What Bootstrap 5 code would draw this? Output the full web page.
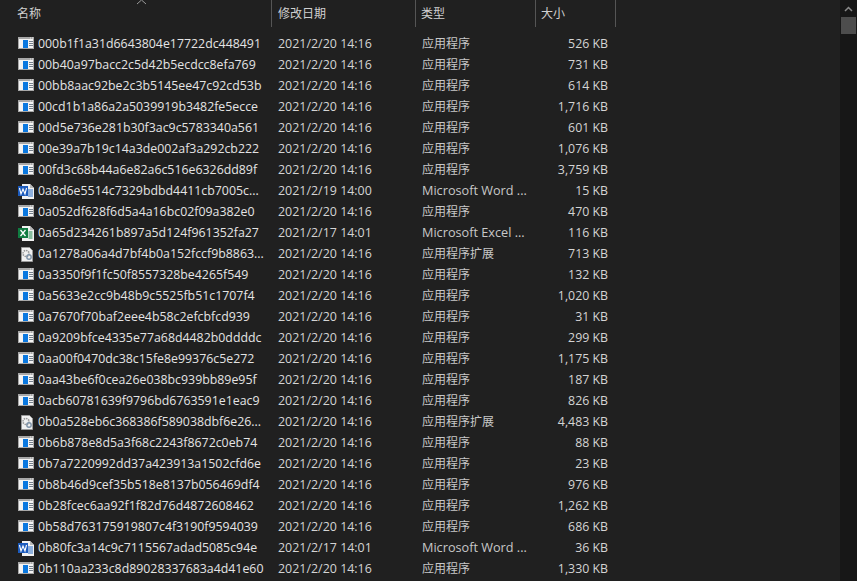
<!DOCTYPE html>
<html lang="zh"><head><meta charset="utf-8"><title>文件列表</title>
<link href="https://cdn.jsdelivr.net/npm/bootstrap@5.3.0/dist/css/bootstrap.min.css" rel="stylesheet">
<style>
html,body{height:581px;overflow:hidden}
body{background:#202020;color:#dcdcdc;font-family:"Open Sans","Noto Sans CJK SC",sans-serif;font-size:12px;line-height:21px}
.shell{height:581px}
.pane{width:840px;min-width:0}
.sbar{width:17px;background:#171717}
.sthumb{width:15px;height:17px;background:#4d4d4d;margin:0 1px}
.sarrow{height:17px}
.headrow{height:27px;line-height:27px;margin-bottom:6px;color:#d0d0d0}
.hname{width:272px;padding-left:17px;border-right:1px solid #555}
.hdate{width:144px;padding-left:6px;border-right:1px solid #555}
.htype{width:120px;padding-left:5px;border-right:1px solid #555}
.hsize{width:80px;padding-left:5px;border-right:1px solid #555}
.sortmark{left:136px;top:-1px}
.filerow{height:21px;white-space:nowrap}
.cicon{width:38px;padding-left:18px}
.cname{width:234px;color:#e4e4e4;overflow:hidden;font-size:12.35px}
.cdate{width:144px;padding-left:6px;color:#d4d4d4;font-size:12.45px}
.ctype{width:120px;padding-left:6px;color:#c8c8c8;overflow:hidden}
.latin{font-size:12.7px}
.csize{width:72px;text-align:right;color:#d4d4d4;font-size:12.35px}
.fic{width:16px;height:16px;display:block}
</style></head><body>
<svg width="0" height="0" class="d-block">
<symbol id="app" viewBox="0 0 16 16"><rect width="16" height="12" fill="#a8a8a8"/><rect x="1" y="2" width="14" height="9" fill="#f4f4f4"/><path d="M12 1h1M14 1h1" stroke="#e8e8e8"/><rect x="5" y="3" width="5" height="8" fill="#0a78e0"/><path d="M11 4.500h4M11 6.500h4M11 8.500h4" stroke="#75808c"/></symbol>
<symbol id="word" viewBox="0 0 16 16"><path d="M4 0h8l4 4v11H4z" fill="#f2f2f2"/><path d="M12 0l4 4h-4z" fill="#b9b9b9"/><path d="M10 6h5M10 8h5M10 10h5M10 12h5" stroke="#2b6fc9"/><rect y="2" width="10" height="10" fill="#1c5bbd"/><path d="M1.500 4l1.500 6 2-5 2 5 1.500-6" fill="none" stroke="#fff" stroke-width="1.100"/></symbol>
<symbol id="excel" viewBox="0 0 16 16"><path d="M4 0h8l4 4v11H4z" fill="#f2f2f2"/><path d="M12 0l4 4h-4z" fill="#b9b9b9"/><path d="M10.500 6h4M10.500 8h4M10.500 10h4M10.500 12h4" stroke="#1f8a4c"/><rect y="2" width="10" height="10" fill="#107c41"/><path d="M2.500 4l5 6M7.500 4l-5 6" stroke="#fff" stroke-width="1.300"/></symbol>
<symbol id="dll" viewBox="0 0 16 16"><path d="M3.500.500h8l3 3v11h-11z" fill="#f1f1f1" stroke="#9a9a9a"/><circle cx="8" cy="6.500" r="3" fill="none" stroke="#9a9a9a" stroke-width="1.600" stroke-dasharray="1.500 .8"/><circle cx="11" cy="10" r="2.200" fill="none" stroke="#7f93a8" stroke-width="1.400"/></symbol>
</svg>
<div class="shell d-flex">
<div class="pane">
<div class="headrow d-flex position-relative">
<svg class="position-absolute sortmark" width="11" height="6" viewBox="0 0 11 6"><path d="M1 5l4.500-4 4.500 4" fill="none" stroke="#9a9a9a"/></svg>
<div class="hname">名称</div><div class="hdate">修改日期</div><div class="htype">类型</div><div class="hsize">大小</div>
</div>
<div class="filerow d-flex"><div class="cicon"><svg class="fic mt-1"><use href="#app"/></svg></div><div class="cname">000b1f1a31d6643804e17722dc448491</div><div class="cdate">2021/2/20 14:16</div><div class="ctype">应用程序</div><div class="csize">526 KB</div></div>
<div class="filerow d-flex"><div class="cicon"><svg class="fic mt-1"><use href="#app"/></svg></div><div class="cname">00b40a97bacc2c5d42b5ecdcc8efa769</div><div class="cdate">2021/2/20 14:16</div><div class="ctype">应用程序</div><div class="csize">731 KB</div></div>
<div class="filerow d-flex"><div class="cicon"><svg class="fic mt-1"><use href="#app"/></svg></div><div class="cname">00bb8aac92be2c3b5145ee47c92cd53b</div><div class="cdate">2021/2/20 14:16</div><div class="ctype">应用程序</div><div class="csize">614 KB</div></div>
<div class="filerow d-flex"><div class="cicon"><svg class="fic mt-1"><use href="#app"/></svg></div><div class="cname">00cd1b1a86a2a5039919b3482fe5ecce</div><div class="cdate">2021/2/20 14:16</div><div class="ctype">应用程序</div><div class="csize">1,716 KB</div></div>
<div class="filerow d-flex"><div class="cicon"><svg class="fic mt-1"><use href="#app"/></svg></div><div class="cname">00d5e736e281b30f3ac9c5783340a561</div><div class="cdate">2021/2/20 14:16</div><div class="ctype">应用程序</div><div class="csize">601 KB</div></div>
<div class="filerow d-flex"><div class="cicon"><svg class="fic mt-1"><use href="#app"/></svg></div><div class="cname">00e39a7b19c14a3de002af3a292cb222</div><div class="cdate">2021/2/20 14:16</div><div class="ctype">应用程序</div><div class="csize">1,076 KB</div></div>
<div class="filerow d-flex"><div class="cicon"><svg class="fic mt-1"><use href="#app"/></svg></div><div class="cname">00fd3c68b44a6e82a6c516e6326dd89f</div><div class="cdate">2021/2/20 14:16</div><div class="ctype">应用程序</div><div class="csize">3,759 KB</div></div>
<div class="filerow d-flex"><div class="cicon"><svg class="fic mt-1"><use href="#word"/></svg></div><div class="cname">0a8d6e5514c7329bdbd4411cb7005c...</div><div class="cdate">2021/2/19 14:00</div><div class="ctype latin">Microsoft Word ...</div><div class="csize">15 KB</div></div>
<div class="filerow d-flex"><div class="cicon"><svg class="fic mt-1"><use href="#app"/></svg></div><div class="cname">0a052df628f6d5a4a16bc02f09a382e0</div><div class="cdate">2021/2/20 14:16</div><div class="ctype">应用程序</div><div class="csize">470 KB</div></div>
<div class="filerow d-flex"><div class="cicon"><svg class="fic mt-1"><use href="#excel"/></svg></div><div class="cname">0a65d234261b897a5d124f961352fa27</div><div class="cdate">2021/2/17 14:01</div><div class="ctype latin">Microsoft Excel ...</div><div class="csize">116 KB</div></div>
<div class="filerow d-flex"><div class="cicon"><svg class="fic mt-1"><use href="#dll"/></svg></div><div class="cname">0a1278a06a4d7bf4b0a152fccf9b8863...</div><div class="cdate">2021/2/20 14:16</div><div class="ctype">应用程序扩展</div><div class="csize">713 KB</div></div>
<div class="filerow d-flex"><div class="cicon"><svg class="fic mt-1"><use href="#app"/></svg></div><div class="cname">0a3350f9f1fc50f8557328be4265f549</div><div class="cdate">2021/2/20 14:16</div><div class="ctype">应用程序</div><div class="csize">132 KB</div></div>
<div class="filerow d-flex"><div class="cicon"><svg class="fic mt-1"><use href="#app"/></svg></div><div class="cname">0a5633e2cc9b48b9c5525fb51c1707f4</div><div class="cdate">2021/2/20 14:16</div><div class="ctype">应用程序</div><div class="csize">1,020 KB</div></div>
<div class="filerow d-flex"><div class="cicon"><svg class="fic mt-1"><use href="#app"/></svg></div><div class="cname">0a7670f70baf2eee4b58c2efcbfcd939</div><div class="cdate">2021/2/20 14:16</div><div class="ctype">应用程序</div><div class="csize">31 KB</div></div>
<div class="filerow d-flex"><div class="cicon"><svg class="fic mt-1"><use href="#app"/></svg></div><div class="cname">0a9209bfce4335e77a68d4482b0ddddc</div><div class="cdate">2021/2/20 14:16</div><div class="ctype">应用程序</div><div class="csize">299 KB</div></div>
<div class="filerow d-flex"><div class="cicon"><svg class="fic mt-1"><use href="#app"/></svg></div><div class="cname">0aa00f0470dc38c15fe8e99376c5e272</div><div class="cdate">2021/2/20 14:16</div><div class="ctype">应用程序</div><div class="csize">1,175 KB</div></div>
<div class="filerow d-flex"><div class="cicon"><svg class="fic mt-1"><use href="#app"/></svg></div><div class="cname">0aa43be6f0cea26e038bc939bb89e95f</div><div class="cdate">2021/2/20 14:16</div><div class="ctype">应用程序</div><div class="csize">187 KB</div></div>
<div class="filerow d-flex"><div class="cicon"><svg class="fic mt-1"><use href="#app"/></svg></div><div class="cname">0acb60781639f9796bd6763591e1eac9</div><div class="cdate">2021/2/20 14:16</div><div class="ctype">应用程序</div><div class="csize">826 KB</div></div>
<div class="filerow d-flex"><div class="cicon"><svg class="fic mt-1"><use href="#dll"/></svg></div><div class="cname">0b0a528eb6c368386f589038dbf6e26...</div><div class="cdate">2021/2/20 14:16</div><div class="ctype">应用程序扩展</div><div class="csize">4,483 KB</div></div>
<div class="filerow d-flex"><div class="cicon"><svg class="fic mt-1"><use href="#app"/></svg></div><div class="cname">0b6b878e8d5a3f68c2243f8672c0eb74</div><div class="cdate">2021/2/20 14:16</div><div class="ctype">应用程序</div><div class="csize">88 KB</div></div>
<div class="filerow d-flex"><div class="cicon"><svg class="fic mt-1"><use href="#app"/></svg></div><div class="cname">0b7a7220992dd37a423913a1502cfd6e</div><div class="cdate">2021/2/20 14:16</div><div class="ctype">应用程序</div><div class="csize">23 KB</div></div>
<div class="filerow d-flex"><div class="cicon"><svg class="fic mt-1"><use href="#app"/></svg></div><div class="cname">0b8b46d9cef35b518e8137b056469df4</div><div class="cdate">2021/2/20 14:16</div><div class="ctype">应用程序</div><div class="csize">976 KB</div></div>
<div class="filerow d-flex"><div class="cicon"><svg class="fic mt-1"><use href="#app"/></svg></div><div class="cname">0b28fcec6aa92f1f82d76d4872608462</div><div class="cdate">2021/2/20 14:16</div><div class="ctype">应用程序</div><div class="csize">1,262 KB</div></div>
<div class="filerow d-flex"><div class="cicon"><svg class="fic mt-1"><use href="#app"/></svg></div><div class="cname">0b58d763175919807c4f3190f9594039</div><div class="cdate">2021/2/20 14:16</div><div class="ctype">应用程序</div><div class="csize">686 KB</div></div>
<div class="filerow d-flex"><div class="cicon"><svg class="fic mt-1"><use href="#word"/></svg></div><div class="cname">0b80fc3a14c9c7115567adad5085c94e</div><div class="cdate">2021/2/17 14:01</div><div class="ctype latin">Microsoft Word ...</div><div class="csize">36 KB</div></div>
<div class="filerow d-flex"><div class="cicon"><svg class="fic mt-1"><use href="#app"/></svg></div><div class="cname">0b110aa233c8d89028337683a4d41e60</div><div class="cdate">2021/2/20 14:16</div><div class="ctype">应用程序</div><div class="csize">1,330 KB</div></div>
</div>
<div class="sbar ms-auto">
<div class="sarrow d-flex justify-content-center align-items-center"><svg width="9" height="6" viewBox="0 0 9 6"><path d="M1 5l3.500-3.500L8 5" fill="none" stroke="#8a8a8a" stroke-width="1.500"/></svg></div>
<div class="sthumb"></div>
</div>
</div>
</body></html>
